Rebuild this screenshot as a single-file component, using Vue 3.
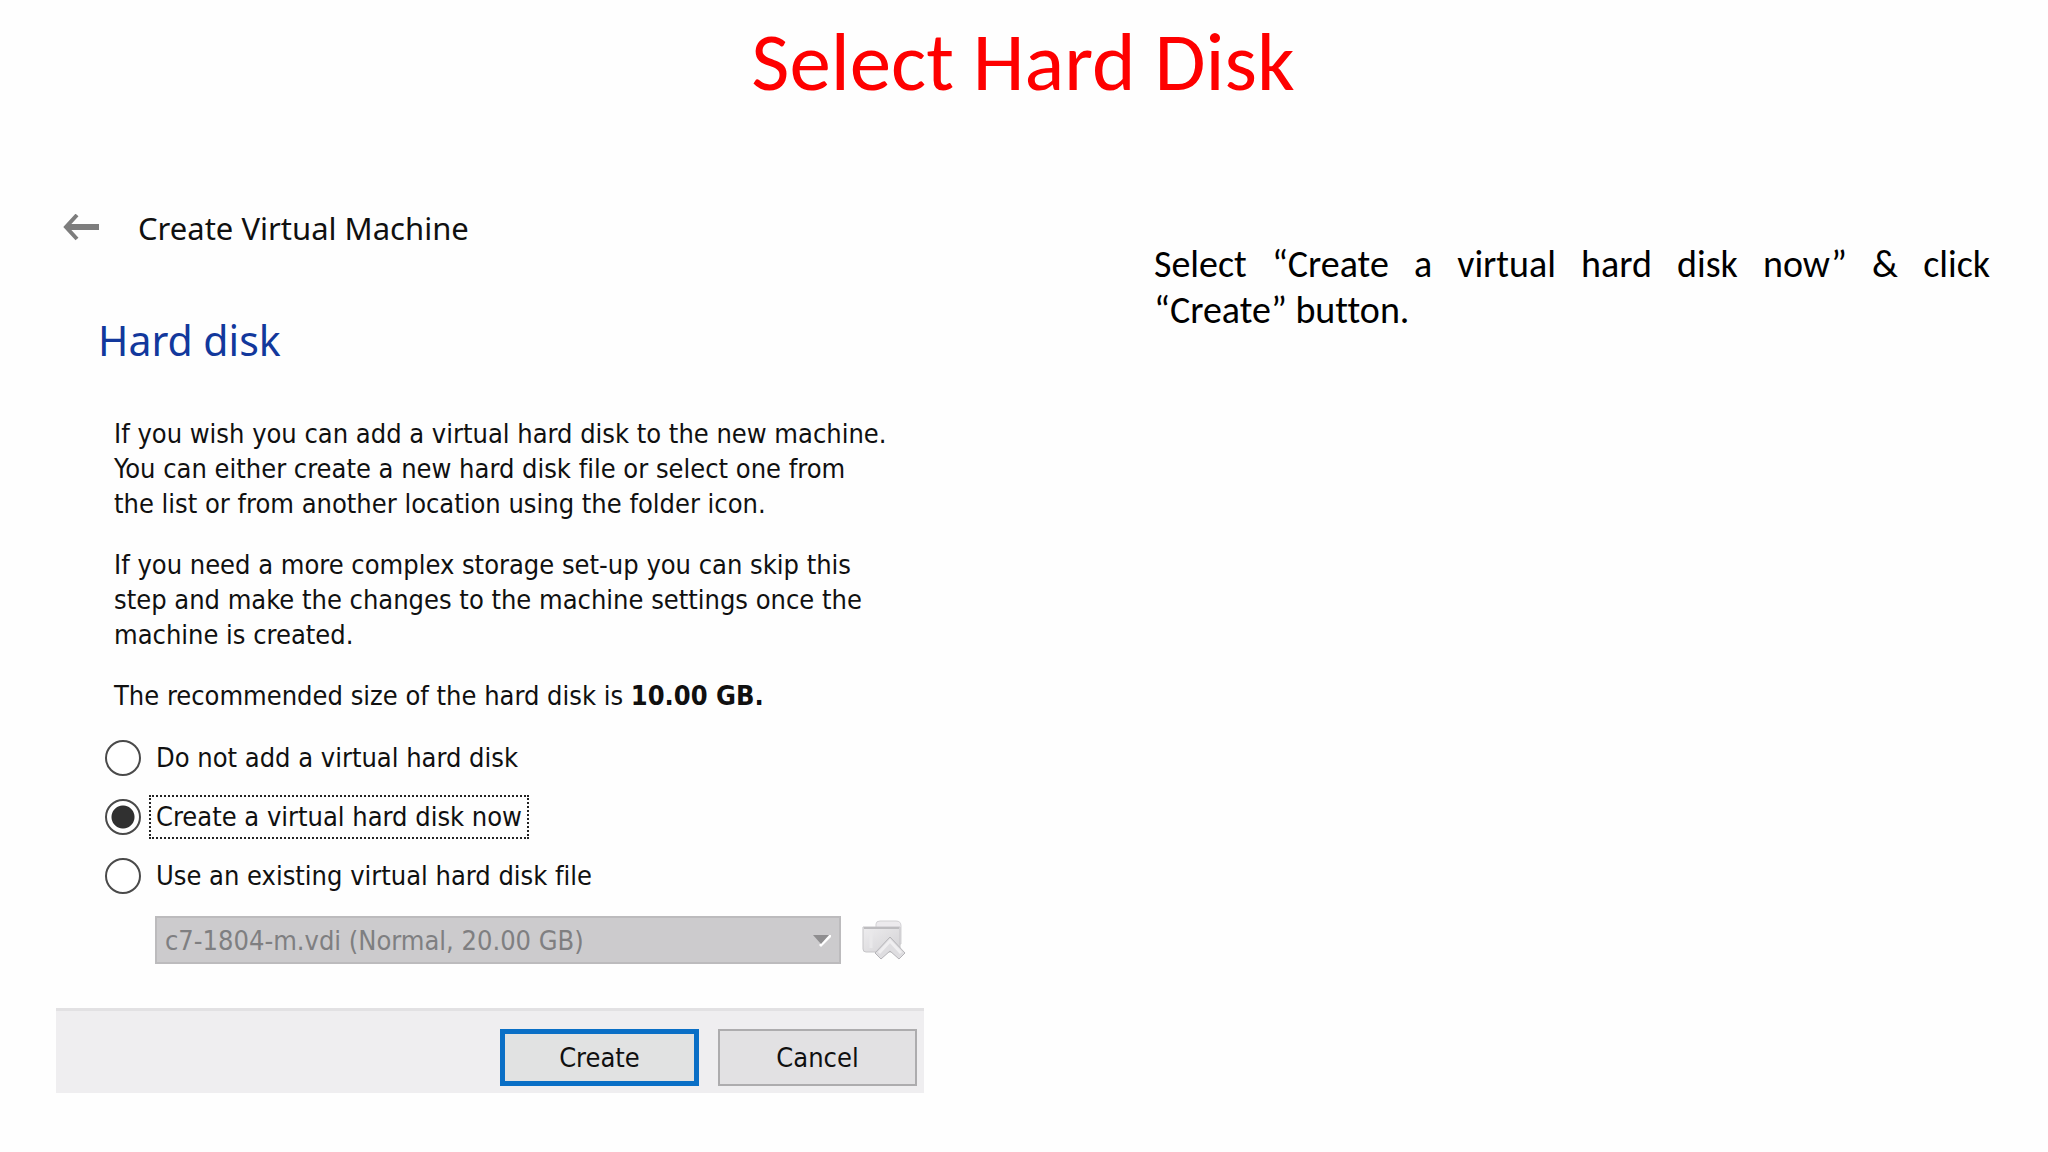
<script setup>
import { ref } from 'vue'

const paragraphs = [
  ['If you wish you can add a virtual hard disk to the new machine.', 'You can either create a new hard disk file or select one from', 'the list or from another location using the folder icon.'],
  ['If you need a more complex storage set-up you can skip this', 'step and make the changes to the machine settings once the', 'machine is created.'],
]
const options = [
  { value: 'none', label: 'Do not add a virtual hard disk' },
  { value: 'create', label: 'Create a virtual hard disk now' },
  { value: 'existing', label: 'Use an existing virtual hard disk file' },
]
const choice = ref('create')
</script>

<template>
  <main class="slide">
    <h1 class="slide-title">Select Hard Disk</h1>
    <div class="columns">
      <section class="dialog" aria-label="Create Virtual Machine">
        <header class="dialog-header">
          <button class="back" type="button" aria-label="Back">
            <svg width="36" height="28" viewBox="0 0 36 28" fill="none" stroke="#7d7d7d">
              <path d="M3 13H36" stroke-width="6" />
              <path d="M14 1L3 13L14 25" stroke-width="4" />
            </svg>
          </button>
          <span class="dialog-name">Create Virtual Machine</span>
        </header>
        <h2 class="page-title">Hard disk</h2>
        <div class="copy">
          <p v-for="(lines, i) in paragraphs" :key="i">
            <template v-for="(line, j) in lines" :key="j">{{ line }}<br v-if="j < lines.length - 1" /></template>
          </p>
          <p>The recommended size of the hard disk is <b>10.00 GB.</b></p>
        </div>
        <div class="options" role="radiogroup" aria-label="Hard disk">
          <label v-for="o in options" :key="o.value" class="option">
            <input v-model="choice" type="radio" name="disk" :value="o.value" />
            <span class="option-text">{{ o.label }}</span>
          </label>
        </div>
        <div class="file-row">
          <div class="select-wrap">
            <select disabled aria-label="Virtual hard disk file">
              <option>c7-1804-m.vdi (Normal, 20.00 GB)</option>
            </select>
            <svg class="caret" width="18" height="14" viewBox="0 0 18 14">
              <path d="M8 13L18 3V1L16 1L6 11Z" fill="#fff" />
              <path d="M0 1H16L8 10Z" fill="#8f8e90" />
            </svg>
          </div>
          <button class="folder" type="button" disabled aria-label="Choose a virtual hard disk file">
            <svg width="44" height="40" viewBox="0 0 44 40">
              <defs>
                <linearGradient id="folder-fill" x1="0" y1="0" x2="1" y2="1">
                  <stop offset="0" stop-color="#eeedef" />
                  <stop offset="1" stop-color="#d3d2d5" />
                </linearGradient>
              </defs>
              <path d="M14 8V4Q14 1 18 1H34Q39 1 39 6V24H14Z" fill="#eceaed" stroke="#d2d1d4" />
              <path d="M1 7H38V30Q38 32 36 32H4Q1 32 1 29Z" fill="url(#folder-fill)" stroke="#c6c5c8" />
              <path d="M2 8H37" stroke="#bdbcbf" stroke-width="2" />
              <path d="M9 11V28" stroke="#e9e8ea" stroke-width="3" />
              <path d="M28 17L43 33L37 39L28 31L19 39L13 33Z" fill="#dedde0" stroke="#b5b4b8" stroke-linejoin="round" />
              <path d="M17 33L28 21L39 33" fill="none" stroke="#efeef0" stroke-width="3" />
            </svg>
          </button>
        </div>
        <footer class="dialog-footer">
          <button class="action primary" type="button">Create</button>
          <button class="action" type="button">Cancel</button>
        </footer>
      </section>
      <p class="note">Select “Create a virtual hard disk now” &amp; click “Create” button.</p>
    </div>
  </main>
</template>

<style>
body {
  margin: 0;
  background: #fefefe;
}
</style>

<style scoped>
.slide {
  box-sizing: border-box;
  min-height: 100vh;
  padding: 12px 58px 56px 56px;
  color: #000;
  font-family: Carlito, Lato, sans-serif;
  font-variant-ligatures: none;
}
.slide-title {
  margin: 0;
  color: #fe0000;
  font-size: 83px;
  font-weight: 400;
  line-height: 100px;
  text-align: center;
}
.columns {
  display: grid;
  grid-template-columns: 868fr 836fr;
  column-gap: 230px;
  align-items: start;
  padding-top: 92px;
}
.dialog {
  color: #101010;
  font-family: "DejaVu Sans Condensed", "DejaVu Sans", sans-serif;
  font-stretch: condensed;
  font-size: 27px;
  line-height: 35px;
}
.dialog-header {
  display: flex;
  align-items: center;
  gap: 39px;
  padding-left: 7px;
  line-height: 48px;
}
button {
  font: inherit;
  color: inherit;
}
.back,
.folder {
  display: flex;
  padding: 0;
  border: 0;
  background: none;
}
.dialog-name {
  font-family: "Noto Sans", sans-serif;
  font-size: 31px;
}
.page-title {
  margin: 58px 0 0 42px;
  color: #12389c;
  font-family: "Noto Sans", sans-serif;
  font-size: 41px;
  font-weight: 400;
  line-height: 60px;
}
.copy {
  margin: 46px 0 0 58px;
  white-space: nowrap;
}
.copy p {
  margin: 0 0 26px;
}
.options {
  display: flex;
  flex-direction: column;
  align-items: flex-start;
  gap: 15px;
  margin: -3px 0 0 49px;
}
.option {
  display: flex;
  align-items: center;
  gap: 8px;
}
.option input {
  appearance: none;
  width: 36px;
  height: 36px;
  margin: 0;
  border: 2px solid #4a4a4a;
  border-radius: 50%;
  background: #fff;
}
.option input:checked {
  background: radial-gradient(circle, #303030 11px, #fff 12px);
}
.option-text {
  padding: 2px 5px;
  border: 2px solid transparent;
  line-height: 36px;
}
.option input:checked + .option-text {
  border: 2px dotted #222;
}
.file-row {
  display: flex;
  align-items: center;
  gap: 21px;
  margin: 18px 18px 0 99px;
}
.select-wrap {
  position: relative;
  flex: 1;
}
select {
  display: block;
  appearance: none;
  width: 100%;
  height: 48px;
  padding: 0 8px;
  border: 2px solid #bcbbbd;
  border-radius: 0;
  background: #cccbcd;
  color: #7f7f81;
  font: inherit;
  opacity: 1;
}
.caret {
  position: absolute;
  top: 18px;
  right: 10px;
}
.dialog-footer {
  display: flex;
  justify-content: flex-end;
  gap: 19px;
  margin-top: 44px;
  padding: 18px 7px 7px;
  border-top: 3px solid #e2e1e3;
  background: #efeef0;
}
.action {
  width: 199px;
  height: 57px;
  padding: 0;
  border: 2px solid #adacae;
  background: #e2e1e3;
}
.action.primary {
  border: 5px solid #0a6fc6;
  background: #e1e2e2;
}
.note {
  margin: 37px 0 0;
  font-size: 38px;
  line-height: 46px;
  text-align: justify;
}
</style>
